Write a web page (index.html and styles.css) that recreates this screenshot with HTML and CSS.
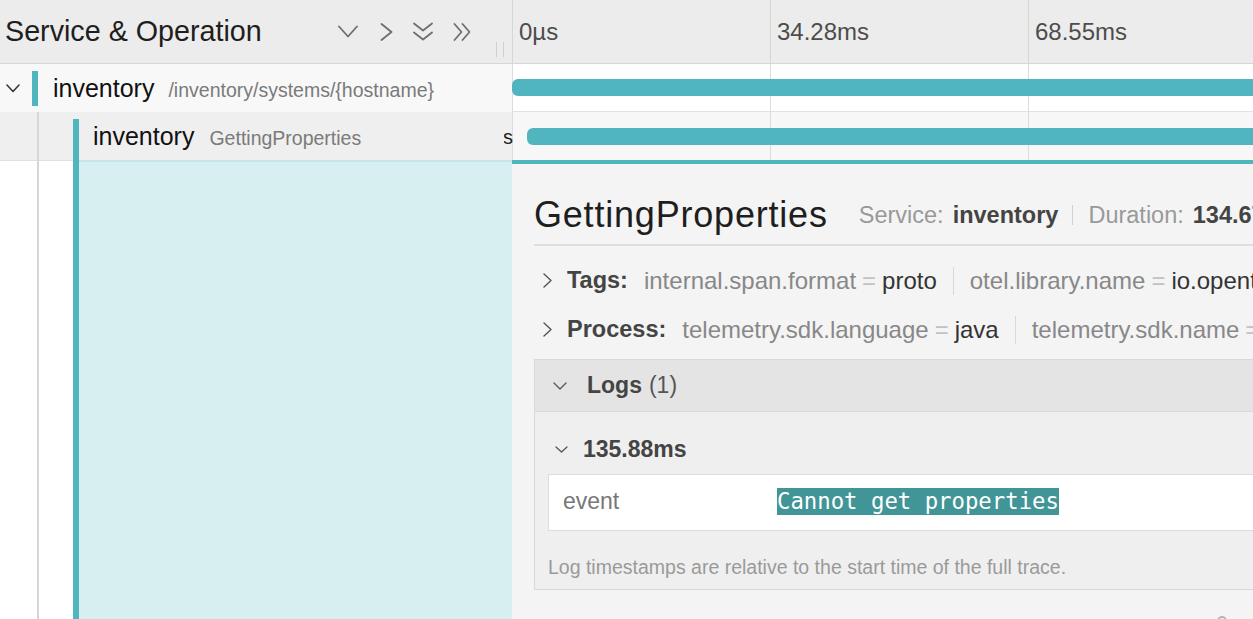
FILE: index.html
```html
<!DOCTYPE html>
<html>
<head>
<meta charset="utf-8">
<title>Trace</title>
<link rel="stylesheet" href="styles.css">
</head>
<body>
<div class="page">
  <div class="header">
    <div class="hdr-left">
      <div class="hdr-title">Service &amp; Operation</div>
      <div class="hdr-icons">
        <svg class="ic-down" width="20" height="13" viewBox="0 0 20 13"><polyline points="1,1.5 10,11.5 19,1.5"/></svg>
        <svg class="ic-right" width="13" height="18" viewBox="0 0 13 18"><polyline points="1.5,1 11.5,9 1.5,17"/></svg>
        <svg class="ic-ddown" width="20" height="19" viewBox="0 0 20 19"><polyline points="1,1.5 10,8.5 19,1.5"/><polyline points="1,10.5 10,17.5 19,10.5"/></svg>
        <svg class="ic-dright" width="18" height="18" viewBox="0 0 18 18"><polyline points="1.5,1 8.5,9 1.5,17"/><polyline points="9.5,1 16.5,9 9.5,17"/></svg>
      </div>
      <div class="resizer"></div>
    </div>
    <div class="hdr-ticks">
      <div class="tick">0µs</div>
      <div class="tick">34.28ms</div>
      <div class="tick">68.55ms</div>
    </div>
  </div>

  <div class="row row-1">
    <div class="name-cell">
      <svg class="toggle" width="14" height="9" viewBox="0 0 14 9"><polyline points="1,1 7,7.5 13,1"/></svg>
      <div class="svc-bar"></div>
      <div class="label"><span class="svc">inventory</span><span class="op">/inventory/systems/{hostname}</span></div>
    </div>
    <div class="tl-cell"><div class="span-bar"></div></div>
  </div>

  <div class="row row-2">
    <div class="name-cell">
      <div class="indent"></div>
      <div class="guide"></div>
      <div class="svc-bar"></div>
      <div class="label"><span class="svc">inventory</span><span class="op">GettingProperties</span></div>
    </div>
    <div class="tl-cell">
      <div class="bar-label"><span>134.67ms</span></div>
      <div class="span-bar"></div>
    </div>
  </div>

  <div class="detail-row">
    <div class="detail-left">
      <div class="indent"></div>
      <div class="guide"></div>
      <div class="gap"></div>
      <div class="svc-bar"></div>
      <div class="accent"></div>
    </div>
    <div class="detail-right">
      <div class="panel">
        <div class="dh">
          <h2 class="dh-title">GettingProperties</h2>
          <div class="dh-meta">
            <span>Service:</span><strong>inventory</strong>
            <span class="m-sep"></span>
            <span>Duration:</span><strong>134.67ms</strong>
            <span class="m-sep"></span>
            <span>Start Time:</span><strong>1.57ms</strong>
          </div>
        </div>

        <div class="kv-rows">
          <div class="kv-row">
            <svg class="kv-chev" width="9" height="15" viewBox="0 0 9 15"><polyline points="1,1 8,7.5 1,14"/></svg>
            <span class="kv-label">Tags:</span>
            <ul class="kv-items">
              <li><span class="k">internal.span.format</span><span class="eq">=</span><span class="v">proto</span></li>
              <li><span class="k">otel.library.name</span><span class="eq">=</span><span class="v">io.opentelemetry.grpc-1.6</span></li>
            </ul>
          </div>
          <div class="kv-row">
            <svg class="kv-chev" width="9" height="15" viewBox="0 0 9 15"><polyline points="1,1 8,7.5 1,14"/></svg>
            <span class="kv-label">Process:</span>
            <ul class="kv-items">
              <li><span class="k">telemetry.sdk.language</span><span class="eq">=</span><span class="v">java</span></li>
              <li><span class="k">telemetry.sdk.name</span><span class="eq">=</span><span class="v">opentelemetry</span></li>
            </ul>
          </div>
        </div>

        <div class="logs">
          <div class="logs-hdr">
            <svg width="14" height="8" viewBox="0 0 14 8"><polyline points="1,1 7,7 13,1"/></svg>
            <strong>Logs</strong><span>(1)</span>
          </div>
          <div class="logs-body">
            <div class="log-ts">
              <svg width="13" height="7" viewBox="0 0 13 7"><polyline points="1,1 6.5,6 12,1"/></svg>
              <span>135.88ms</span>
            </div>
            <div class="log-table">
              <div class="lk">event</div>
              <div class="lv"><span class="hl">Cannot get properties</span></div>
            </div>
            <div class="log-note">Log timestamps are relative to the start time of the full trace.</div>
          </div>
        </div>

        <div class="panel-foot"><div class="dot"></div></div>
      </div>
    </div>
  </div>
</div>
</body>
</html>
```
FILE: styles.css
```css
* { box-sizing: border-box; }
html, body { margin: 0; padding: 0; }
body {
  font-family: "Liberation Sans", Arial, sans-serif;
  background: #fff;
  color: #222;
}
.page {
  width: 1253px;
  height: 619px;
  overflow: hidden;
  display: flex;
  flex-direction: column;
}

/* header */
.header {
  display: flex;
  flex: none;
  height: 64px;
  background: #ececec;
  border-bottom: 1px solid #d6d6d6;
}
.hdr-left {
  width: 512px;
  flex: none;
  display: flex;
  align-items: center;
}
.hdr-title {
  padding-left: 5px;
  font-size: 28.7px;
  color: #1e1e1e;
  white-space: nowrap;
}
.hdr-icons {
  margin-left: auto;
  display: flex;
  align-items: center;
}
.hdr-icons svg {
  display: block;
  flex: none;
  fill: none;
  stroke: #6e6e6e;
  stroke-width: 1.8;
  stroke-linecap: round;
  stroke-linejoin: round;
}
.ic-right { margin-left: 22px; }
.ic-ddown, .ic-dright { margin-left: 20px; }
.resizer {
  flex: none;
  align-self: flex-end;
  margin: 0 8px 6px 25px;
  width: 8px;
  height: 15px;
  border-left: 1px solid #d0d0d0;
  border-right: 1px solid #d0d0d0;
}
.hdr-ticks { flex: 1; display: flex; }
.tick {
  width: 258px;
  flex: none;
  border-left: 1px solid #d6d6d6;
  padding-left: 6px;
  display: flex;
  align-items: center;
  font-size: 24px;
  color: #4d4d4d;
  white-space: nowrap;
}

/* span rows */
.row { display: flex; flex: none; height: 48px; }
.name-cell {
  width: 512px;
  flex: none;
  display: flex;
  align-items: center;
}
.row-1 .name-cell { background: #f8f8f8; }
.row-2 .name-cell { background: #efefef; }
.toggle {
  flex: none;
  margin-left: 6px;
  fill: none;
  stroke: #333;
  stroke-width: 1.5;
  stroke-linecap: round;
  stroke-linejoin: round;
}
.svc-bar { width: 6px; flex: none; background: #51b5c0; }
.row-1 .svc-bar { margin-left: 12px; height: 35px; }
.row-2 .svc-bar { margin-left: 34px; align-self: stretch; margin-top: 7px; }
.indent { width: 37px; flex: none; align-self: stretch; }
.guide { width: 2px; flex: none; align-self: stretch; background: #d6d6d6; }
.label { margin-left: 15px; white-space: nowrap; }
.row-2 .label { margin-left: 14px; }
.svc { font-size: 25px; color: #111; }
.op { font-size: 19.5px; color: #7a7a7a; margin-left: 14px; }
.row-2 .op { margin-left: 15px; }

.tl-cell {
  flex: 1;
  position: relative;
  display: flex;
  align-items: center;
  background-image: linear-gradient(to right, #dcdcdc 1px, transparent 1px);
  background-size: 258px 100%;
}
.row-1 .tl-cell { background-color: #fff; border-bottom: 1px solid #e2e2e2; }
.row-2 .tl-cell { background-color: #f7f7f7; }
.span-bar {
  flex: none;
  width: 800px;
  height: 17px;
  background: #51b5c0;
  border-radius: 6px 0 0 6px;
}
.row-2 .span-bar { margin-left: 15px; }
.bar-label {
  position: absolute;
  left: -8px;
  top: 0;
  width: 9px;
  height: 100%;
  overflow: hidden;
}
.bar-label span {
  position: absolute;
  right: 0;
  top: 14px;
  font-size: 20px;
  color: #222;
  white-space: nowrap;
}

/* detail row */
.detail-row { flex: 1; display: flex; min-height: 0; }
.detail-left { width: 512px; flex: none; display: flex; background: #fff; }
.detail-left .indent, .detail-left .gap { border-top: 1px solid #e0e0e0; }
.detail-left .gap { width: 34px; flex: none; }
.detail-left .svc-bar { align-self: stretch; }
.accent { flex: 1; background: #d7eff1; border-top: 2px solid #c5e5e8; }

.detail-right {
  flex: 1;
  min-width: 0;
  background: #f4f4f4;
  border-top: 4px solid #51b5c0;
  overflow: hidden;
}
.panel { width: 900px; padding-left: 22px; white-space: nowrap; }

.dh {
  display: flex;
  align-items: center;
  height: 82px;
  padding-top: 22px;
  border-bottom: 2px solid #dedede;
}
.dh-title {
  flex: none;
  margin: 0;
  font-size: 36px;
  letter-spacing: 0.8px;
  font-weight: normal;
  color: #1e1e1e;
}
.dh-meta {
  flex: none;
  margin-left: 31px;
  display: flex;
  align-items: center;
  font-size: 23.5px;
  color: #999;
}
.dh-meta strong { color: #444; margin-left: 9px; }
.m-sep { flex: none; width: 1px; height: 20px; background: #d0d0d0; margin: 0 15px 0 14px; }

.kv-rows { padding-top: 10px; }
.kv-row { display: flex; align-items: center; height: 49px; }
.kv-chev {
  flex: none;
  margin-left: 9px;
  fill: none;
  stroke: #555;
  stroke-width: 1.4;
  stroke-linecap: round;
  stroke-linejoin: round;
}
.kv-label { flex: none; margin-left: 15px; font-size: 23.5px; font-weight: bold; color: #444; }
.kv-items { flex: none; display: flex; align-items: center; margin: 0; padding: 0; list-style: none; }
.kv-items li {
  flex: none;
  display: flex;
  align-items: center;
  height: 28px;
  padding: 0 16px;
  font-size: 24px;
}
.kv-items li + li { border-left: 1px solid #d8d8d8; }
.k { color: #888; }
.eq { color: #c2c2c2; margin: 0 6px; }
.v { color: #333; }

.logs {
  margin-top: 5px;
  width: 880px;
  border: 1px solid #d8d8d8;
  background: #efefef;
}
.logs-hdr {
  height: 52px;
  display: flex;
  align-items: center;
  padding-left: 18px;
  background: #e4e4e4;
  border-bottom: 1px solid #d8d8d8;
  font-size: 23px;
  color: #555;
}
.logs-hdr svg, .log-ts svg {
  flex: none;
  fill: none;
  stroke: #555;
  stroke-width: 1.3;
  stroke-linecap: round;
  stroke-linejoin: round;
}
.logs-hdr svg { margin-right: 20px; }
.logs-hdr strong { color: #444; margin-right: 7px; }
.logs-body { padding: 22px 13px 11px; }
.log-ts {
  display: flex;
  align-items: center;
  height: 30px;
  font-size: 23px;
  font-weight: bold;
  color: #444;
}
.log-ts svg { margin-left: 7px; margin-right: 15px; }
.log-table {
  margin-top: 10px;
  height: 57px;
  display: flex;
  align-items: center;
  padding-bottom: 2px;
  background: #fff;
  border: 1px solid #dcdcdc;
}
.lk { width: 228px; flex: none; padding-left: 14px; font-size: 23px; color: #777; }
.hl {
  display: inline-block;
  font-family: "DejaVu Sans Mono", "Liberation Mono", monospace;
  font-size: 22.3px;
  line-height: 27px;
  background: #419597;
  color: #fff;
}
.log-note {
  margin-top: 25px;
  font-size: 19.5px;
  line-height: 22px;
  color: #9a9a9a;
}
.panel-foot { margin-top: 26px; padding-left: 683px; }
.dot { width: 10px; height: 10px; border-radius: 50%; border: 2px solid #b5b5b5; }
```
